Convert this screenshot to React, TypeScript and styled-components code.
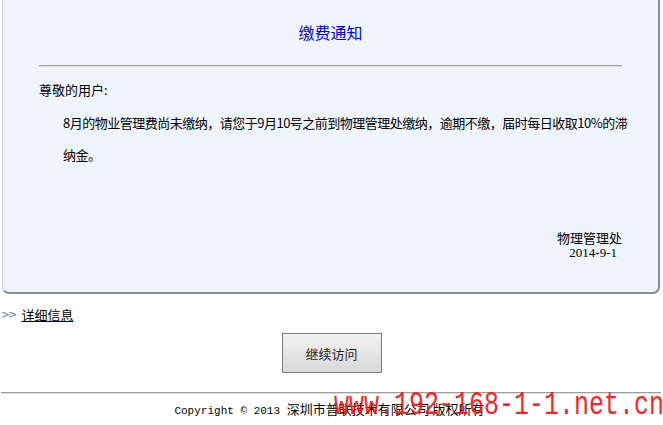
import React from 'react';
import styled, {createGlobalStyle} from 'styled-components';

const GlobalStyle = createGlobalStyle`
    html, body {
        margin: 0;
        padding: 0;
        background: #fff;
        overflow: hidden;
    }
    body {
        font-family: "Noto Sans CJK SC", "DejaVu Sans", sans-serif;
        font-size: 13px;
        color: #000;
    }
`;

const Page = styled.div`
    position: relative;
    width: 663px;
    height: 425px;
    overflow: hidden;
`;

const NoticePanel = styled.div`
    margin: 0 3px 0 2px;
    height: 294px;
    box-sizing: border-box;
    background: #eef5ff;
    border: 1px solid #c8d3df;
    border-top: none;
    border-right: 2px solid #8c8c8c;
    border-bottom: 2px solid #8c8c8c;
    border-radius: 0 0 7px 7px;
    padding: 22px 36px 0 36px;
`;

const Title = styled.div`
    text-align: center;
    color: #0000ff;
    font-size: 16px;
    line-height: 20px;
`;

const Divider = styled.div`
    margin-top: 23px;
    height: 0;
    border-top: 1px solid #a5a5a5;
    border-bottom: 1px solid #dcdcdc;
`;

const Greeting = styled.div`
    margin-top: 14px;
    line-height: 18px;
    font-size: 13px;
`;

const Paragraph = styled.p`
    margin: 8px -10px 0 0;
    padding-left: 24px;
    line-height: 32px;
    font-size: 13px;
    letter-spacing: -0.5px;
`;

const Signature = styled.div`
    margin-top: 59px;
    display: flex;
    flex-direction: column;
    align-items: flex-end;
`;

const Office = styled.div`
    font-size: 13px;
    line-height: 15px;
`;

const DateText = styled.div`
    font-family: "Liberation Serif", serif;
    font-size: 13px;
    line-height: 15px;
    margin-right: 5px;
`;

const DetailRow = styled.div`
    margin-top: 12px;
    display: flex;
    align-items: center;
    gap: 6px;
    padding-left: 1px;
    height: 16px;
`;

const Arrows = styled.span`
    color: #5f7d9c;
    font-family: "DejaVu Sans", sans-serif;
    font-size: 11px;
    letter-spacing: -2px;
`;

const DetailLink = styled.a`
    color: #000;
    font-size: 13px;
    text-decoration: underline;
    cursor: pointer;
`;

const ButtonRow = styled.div`
    margin-top: 11px;
    display: flex;
    justify-content: center;
`;

const ContinueButton = styled.button`
    width: 100px;
    height: 40px;
    border: 1px solid #7a7a7a;
    background: linear-gradient(#f2f2f2, #d9d9d9);
    font-family: "Noto Sans CJK SC", sans-serif;
    font-size: 13px;
    color: #222;
    cursor: pointer;
`;

const FooterRule = styled.div`
    margin: 19px 2px 0 1px;
    border-top: 1px solid #9c9c9c;
    border-bottom: 1px solid #e2e2e2;
`;

const Footer = styled.div`
    margin-top: 7px;
    text-align: center;
    font-size: 13px;
    line-height: 16px;
    padding-right: 4px;
`;

const Latin = styled.span`
    font-family: "Liberation Mono", monospace;
    font-size: 11px;
`;

const Watermark = styled.div`
    position: absolute;
    right: -1px;
    bottom: 2px;
    color: #ff1010;
    font-family: "Liberation Mono", monospace;
    font-size: 25px;
    line-height: 26px;
    transform: scaleY(1.3);
    transform-origin: bottom right;
    opacity: 0.92;
    pointer-events: none;
    white-space: nowrap;
`;

const App: React.FC = () => {
    return (
        <Page>
            <GlobalStyle/>
            <NoticePanel>
                <Title>缴费通知</Title>
                <Divider/>
                <Greeting>尊敬的用户:</Greeting>
                <Paragraph>
                    8月的物业管理费尚未缴纳，请您于9月10号之前到物理管理处缴纳，逾期不缴，届时每日收取10%的滞纳金。
                </Paragraph>
                <Signature>
                    <Office>物理管理处</Office>
                    <DateText>2014-9-1</DateText>
                </Signature>
            </NoticePanel>
            <DetailRow>
                <Arrows>&gt;&gt;</Arrows>
                <DetailLink>详细信息</DetailLink>
            </DetailRow>
            <ButtonRow>
                <ContinueButton>继续访问</ContinueButton>
            </ButtonRow>
            <FooterRule/>
            <Footer>
                <Latin>Copyright © 2013 </Latin>深圳市普联技术有限公司 版权所有
            </Footer>
            <Watermark>www.192-168-1-1.net.cn</Watermark>
        </Page>
    );
};

export default App;
